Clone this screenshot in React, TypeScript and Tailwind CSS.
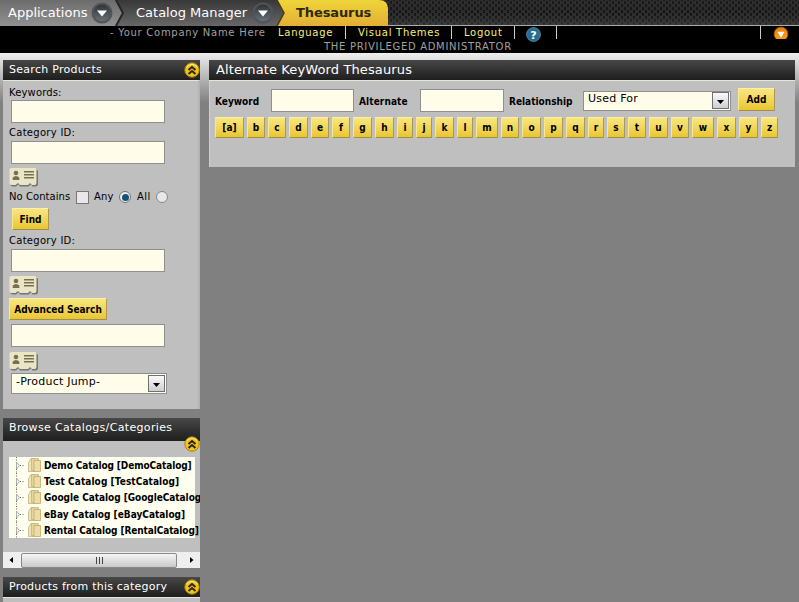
import React from "react";

function Down({ orange = false }: { orange?: boolean }) {
  return (
    <svg width={orange ? 16 : 22} height={orange ? 16 : 22} viewBox="0 0 22 22" className="block shrink-0">
      <defs>
        <linearGradient id={orange ? "dko" : "dk"} x1="0" y1="0" x2="0" y2="1">
          <stop offset="0" stopColor={orange ? "#e87c08" : "#2c3036"} />
          <stop offset="1" stopColor={orange ? "#ffa21c" : "#6d747b"} />
        </linearGradient>
      </defs>
      <circle cx="11" cy="11" r="9.500" fill={orange ? "url(#dko)" : "url(#dk)"} stroke={orange ? "#9b5308" : "#50555b"} strokeWidth={orange ? 1 : 2} />
      <path d={orange ? "M6 8h10l-5 8z" : "M6 8.500h10l-5 6z"} fill="#fff" />
    </svg>
  );
}

function Collapse() {
  return (
    <svg width="16" height="16" viewBox="0 0 16 16" className="block shrink-0">
      <circle cx="8" cy="8" r="7.2" fill="#efc21c" stroke="#a98412" />
      <path d="M2.500 5Q8-.5 13.500 5" stroke="#fbe68a" fill="none" />
      <path d="M4.500 8L8 5l3.500 3M4.500 12L8 9l3.500 3" stroke="#2b2410" strokeWidth="1.900" fill="none" />
    </svg>
  );
}

function Card() {
  return (
    <svg width="30" height="20" viewBox="0 0 30 20" className="block">
      <path d="M3 1.500h24q2 0 2 2V16q0 2.500-3 2.500h-2.500l-1.500-2.200-2.500 2.200H11L9.500 16.300 7 18.500H4q-2.500 0-2.500-2.500V3.500z" fill="#75756c" />
      <path d="M2 0h24q1.500 0 1.500 1.500V15q0 2-2 2h-2.500l-2-2-2 2h-8L9 15l-2.500 2h-4Q.5 17 .5 15V1.500Q.5 0 2 0z" fill="#e9e6c8" />
      <circle cx="7" cy="5" r="2.300" fill="#77704f" />
      <path d="M3.700 12V9.500Q7 6.500 10.300 9.500V12zM15 3h10v1.500H15zM15 6h10v1.500H15zM15 9h10v1.500H15z" fill="#77704f" />
    </svg>
  );
}

function Folder() {
  return (
    <svg width="34" height="16" viewBox="0 0 34 16" className="block shrink-0">
      <path d="M7.500 0v5M7.500 12v4M11 8.500h4" stroke="#666" strokeDasharray="1 1.500" fill="none" />
      <path d="M7.500 5l3 3.500-3 3.500z" fill="#f2f2f2" stroke="#9a9a9a" strokeWidth=".8" />
      <path d="M19.500 5.500l2.500-4h4V14.500h-6.500z" fill="#efe5ba" stroke="#c4b27c" strokeWidth=".8" />
      <path d="M22.500 1.500h7v12h-7z" fill="#e6d69e" stroke="#c4b27c" strokeWidth=".8" />
      <path d="M25 3.500h6.500v11H25z" fill="#eddda4" stroke="#bfa96a" strokeWidth=".8" />
    </svg>
  );
}

const strong = "font-bold [font-family:'DejaVu_Sans_Condensed','DejaVu_Sans',sans-serif]";
const field = "border border-[#8f8f8f] bg-[#fffdea]";
const gold =
  strong +
  " flex items-center justify-center whitespace-nowrap border border-t-[#fbf0a5] border-l-[#f8e989] border-r-[#a89758] border-b-[#a08f50] bg-linear-to-b from-[#f8e67e] to-[#e9c62c] text-black";
const bar = "bg-linear-to-b from-[#484848] to-[#1e1e1e] text-white";

function Select({ text, cls }: { text: string; cls: string }) {
  return (
    <div className={field + " flex items-center justify-between pl-1 pr-px text-[11px] tracking-[0.22px] " + cls}>
      <span className="-mt-[2px]">{text}</span>
      <div className="flex h-[17px] w-[17px] items-center justify-center border border-[#707070] bg-linear-to-b from-[#fafafa] to-[#cfcfcf] pt-[3px]">
        <svg width="7" height="4" viewBox="0 0 7 4"><path d="M0 0h7L3.500 4z" /></svg>
      </div>
    </div>
  );
}

const letters: [string, string][] = [
  ["[a]", "w-[29px]"], ["b", "w-[18px]"], ["c", "w-[18px]"], ["d", "w-[19px]"], ["e", "w-[18px]"], ["f", "w-[18px]"],
  ["g", "w-[19px]"], ["h", "w-[19px]"], ["i", "w-[16px]"], ["j", "w-[16px]"], ["k", "w-[19px]"], ["l", "w-[16px]"],
  ["m", "w-[22px]"], ["n", "w-[18px]"], ["o", "w-[19px]"], ["p", "w-[19px]"], ["q", "w-[19px]"], ["r", "w-[16px]"],
  ["s", "w-[18px]"], ["t", "w-[18px]"], ["u", "w-[19px]"], ["v", "w-[18px]"], ["w", "w-[22px]"], ["x", "w-[19px]"],
  ["y", "w-[19px]"], ["z", "w-[17px]"],
];

const catalogs: [string, string][] = [
  ["Demo Catalog [DemoCatalog]", "tracking-[-0.1px]"],
  ["Test Catalog [TestCatalog]", "tracking-[0.08px]"],
  ["Google Catalog [GoogleCatalog]", "tracking-[-0.05px]"],
  ["eBay Catalog [eBayCatalog]", "tracking-[0px]"],
  ["Rental Catalog [RentalCatalog]", "tracking-[-0.1px]"],
];

function Tabs() {
  return (
    <div className="relative h-[26px] overflow-hidden">
      <svg width="799" height="26" className="absolute inset-0">
        <defs>
          <pattern id="mesh" width="6" height="6" patternUnits="userSpaceOnUse">
            <rect width="6" height="6" fill="#3a3a3a" />
            <rect x="0" y="1" width="2" height="3" fill="#161616" />
            <rect x="3" y="4" width="2" height="2" fill="#161616" />
            <rect x="3" y="0" width="2" height="1" fill="#161616" />
          </pattern>
          <linearGradient id="shade" x1="0" y1="0" x2="0" y2="1">
            <stop offset="0" stopColor="#222" stopOpacity=".5" />
            <stop offset=".5" stopColor="#111" stopOpacity=".3" />
            <stop offset="1" stopColor="#444" stopOpacity=".7" />
          </linearGradient>
          <linearGradient id="g1" x1="0" y1="0" x2="0" y2="1">
            <stop offset="0" stopColor="#6c6c6c" /><stop offset="1" stopColor="#919191" />
          </linearGradient>
          <linearGradient id="g2" x1="0" y1="0" x2="0" y2="1">
            <stop offset="0" stopColor="#383838" /><stop offset="1" stopColor="#676767" />
          </linearGradient>
          <linearGradient id="g3" x1="0" y1="0" x2="0" y2="1">
            <stop offset="0" stopColor="#efd53b" /><stop offset="1" stopColor="#e3ae35" />
          </linearGradient>
        </defs>
        <rect width="799" height="26" fill="url(#mesh)" />
        <rect width="799" height="26" fill="url(#shade)" />
        <path d="M0 25.500h799" stroke="#aaa" />
        <path d="M270 0h109q9 0 9 9v17H270z" fill="url(#g3)" />
        <path d="M110 0h167l7 13-7 13H110z" fill="url(#g2)" />
        <path d="M277 0l7 13-7 13" fill="none" stroke="#4b3b12" strokeWidth="1.500" />
        <path d="M0 0h115l7 13-7 13H0z" fill="url(#g1)" />
        <path d="M116 0l7 13-7 13" fill="none" stroke="#272727" strokeWidth="2" />
      </svg>
      <div className="relative flex h-[26px] items-center text-[13px] text-white">
        <span className="w-[83px] pl-2 whitespace-nowrap">Applications</span>
        <div className="ml-[8px] w-[45px]"><Down /></div>
        <span className="w-[112px] whitespace-nowrap">Catalog Manager</span>
        <div className="ml-[4px] w-[44px]"><Down /></div>
        <b className="whitespace-nowrap tracking-[-0.1px] text-[#30280f]">Thesaurus</b>
      </div>
    </div>
  );
}

function Menu() {
  return (
    <div className="h-[27px] bg-black text-[10px] text-[#a0a0a0]">
      <div className="flex h-[13px] items-start whitespace-nowrap leading-[13px] tracking-[0.72px]">
        <span className="ml-[110px] w-[168px]">- Your Company Name Here</span>
        <span className="w-[67px] text-[#f5ef78]">Language</span>
        <span className="h-[13px] w-[13px] border-l border-[#ccc]" />
        <span className="w-[93px] text-[#f5ef78]">Visual Themes</span>
        <span className="h-[13px] w-[13px] border-l border-[#ccc]" />
        <span className="w-[50px] text-[#f5ef78]">Logout</span>
        <span className="h-[13px] w-[12px] border-l border-[#ccc]" />
        <span className="w-[30px] tracking-normal">
          <svg width="15" height="15" viewBox="0 0 15 15" className="mt-px block">
            <circle cx="7.500" cy="7.500" r="7" fill="#276d92" stroke="#7ba4b8" strokeWidth=".6" />
            <text x="7.500" y="11.500" textAnchor="middle" fontSize="11" fontWeight="bold" fill="#fff">?</text>
          </svg>
        </span>
        <span className="h-[13px] w-[204px] border-l border-[#ccc]" />
        <span className="h-[13px] w-[13px] border-l border-[#ccc]" />
        <span className="h-[13px] overflow-hidden"><Down orange /></span>
      </div>
      <div className="ml-[324px] h-[14px] leading-[16px] whitespace-nowrap tracking-[0.7px]">THE PRIVILEGED ADMINISTRATOR</div>
    </div>
  );
}

export default function App() {
  return (
    <div className="h-[602px] w-[799px] overflow-hidden bg-[#808080] text-black [font-family:'DejaVu_Sans',sans-serif]">
      <Tabs />
      <Menu />
      <main className="flex h-[549px] items-start bg-linear-to-b from-[#eeeeee] to-[#808080] to-[50px] pt-[7px] pl-[3px]">
        <aside className="w-[197px] text-[10px]">
          <section className="h-[349px] bg-[#bfbfbf]">
            <div className={bar + " flex h-[20px] items-center justify-between pl-1.5 text-[11px] tracking-[0.28px]"}>
              <span>Search Products</span><Collapse />
            </div>
            <div className="h-[329px] border-t border-r-2 border-t-[#e8e5d8] border-r-[#b4b4b4] pl-[6px]">
              <div className="h-[19px] pt-[6px] leading-[12px] tracking-[0.15px]">Keywords:</div>
              <div className={field + " ml-[2px] h-[23px] w-[154px]"} />
              <div className="h-[18px] pt-[4px] leading-[12px] tracking-[0.28px]">Category ID:</div>
              <div className={field + " ml-[2px] h-[23px] w-[154px]"} />
              <div className="pt-[4px]"><Card /></div>
              <div className="flex h-[18px] items-center whitespace-nowrap">
                <span className="w-[67px] pb-[2px] tracking-[0.05px]">No Contains</span>
                <span className="h-[13px] w-[13px] border border-[#777] bg-[#e8e8e8]" />
                <span className="ml-[5px] w-[25px] pb-[2px] tracking-[0.2px]">Any</span>
                <span className="flex h-[12px] w-[12px] items-center justify-center rounded-full border border-[#707070] bg-[#eee]">
                  <span className="h-[7px] w-[7px] rounded-full bg-[#12527a]" />
                </span>
                <span className="ml-[6px] w-[19px] pb-[2px] tracking-[0.5px]">All</span>
                <span className="h-[12px] w-[12px] rounded-full border border-[#888] bg-[#e8e8e8]" />
              </div>
              <div className={gold + " ml-[3px] mt-[2px] h-[22px] w-[37px]"}>Find</div>
              <div className="h-[19px] pt-[5px] leading-[12px] tracking-[0.28px]">Category ID:</div>
              <div className={field + " ml-[2px] h-[23px] w-[154px]"} />
              <div className="pt-[4px]"><Card /></div>
              <div className={gold + " mt-[2px] h-[22px] w-[98px]"}>Advanced Search</div>
              <div className={field + " ml-[2px] mt-[4px] h-[23px] w-[154px]"} />
              <div className="pt-[5px]"><Card /></div>
              <Select text="-Product Jump-" cls="ml-[2px] mt-px h-[21px] w-[156px]" />
            </div>
          </section>
          <section className="mt-[9px] h-[150px] bg-[#bfbfbf]">
            <div className={bar + " relative h-[23px] pl-1.5 pt-[1px] text-[11px] leading-[17px] tracking-[0.34px]"}>
              Browse Catalogs/Categories
              <div className="absolute right-0 top-[18px]"><Collapse /></div>
            </div>
            <div className="mt-[16px] h-[81px] w-[197px] pl-[6px] whitespace-nowrap">
              <div className="h-[81px] w-[186px] bg-[#fffff0]">
                {catalogs.map(([name, tracking]) => (
                  <div key={name} className={strong + " flex h-[16.2px] w-[191px] items-center overflow-hidden " + tracking}>
                    <Folder /><span className="ml-px mt-px">{name}</span>
                  </div>
                ))}
              </div>
            </div>
            <div className="mt-[14px] flex h-[16px] items-center bg-[#efefef]">
              <svg width="18" height="16"><path d="M10 5v6L6.500 8z" /></svg>
              <div className="flex h-[15px] w-[156px] items-center justify-center gap-[2px] rounded-[2px] border border-[#888] bg-linear-to-b from-[#f5f5f5] to-[#c9c9c9]">
                <i className="h-[7px] w-px bg-[#444]" /><i className="h-[7px] w-px bg-[#444]" /><i className="h-[7px] w-px bg-[#444]" />
              </div>
              <svg width="23" height="16"><path d="M13 5v6L16.500 8z" /></svg>
            </div>
          </section>
          <section className="mt-[9px] h-[25px] bg-[#bfbfbf]">
            <div className={bar + " flex h-[20px] items-center justify-between pl-1.5 text-[11px] whitespace-nowrap tracking-[0.22px]"}>
              <span>Products from this category</span><Collapse />
            </div>
            <div className="border-t border-[#e8e5d8]" />
          </section>
        </aside>
        <section className="ml-[9px] h-[107px] w-[586px] bg-[#bfbfbf] text-[10px]">
          <div className={bar + " flex h-[20px] items-center pl-[7px] text-[13px] tracking-[0.12px]"}>Alternate KeyWord Thesaurus</div>
          <div className="h-[87px] border-t border-l border-t-[#e8e5d8] border-l-[#d0d0d0] pl-[5px]">
            <div className={strong + " flex items-center pt-[7px] whitespace-nowrap"}>
              <span className="w-[56px] pt-[2px]">Keyword</span>
              <div className={field + " mt-px h-[23px] w-[83px]"} />
              <span className="ml-[5px] w-[61px] pt-[2px] tracking-[0.1px]">Alternate</span>
              <div className={field + " mt-px h-[23px] w-[84px]"} />
              <span className="ml-[5px] w-[74px] pt-[2px]">Relationship</span>
              <Select text="Used For" cls="mt-px h-[20px] w-[148px] font-normal [font-family:'DejaVu_Sans',sans-serif]" />
              <div className={gold + " ml-[7px] -mt-px h-[23px] w-[37px]"}>Add</div>
            </div>
            <div className="mt-[5px] flex gap-[3px]">
              {letters.map(([letter, width]) => (
                <div key={letter} className={gold + " h-[21px] shrink-0 " + width}>{letter}</div>
              ))}
            </div>
          </div>
        </section>
      </main>
    </div>
  );
}
